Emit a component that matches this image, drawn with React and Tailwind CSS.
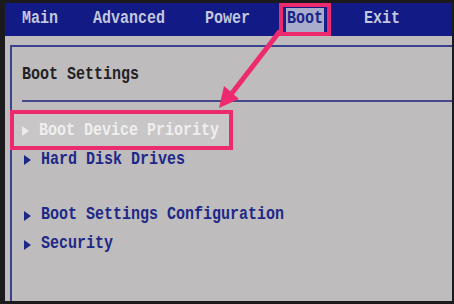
import React from 'react';

const mono = { fontFamily: '"Liberation Mono", "DejaVu Sans Mono", monospace' };

function Tri({ color }) {
  return (
    <svg width="7" height="10" viewBox="0 0 7 10" className="shrink-0">
      <polygon points="0,0 7,5 0,10" fill={color} />
    </svg>
  );
}

function Item({ label, color = '#1d2888' }) {
  return (
    <div className="flex items-center h-[29px] pl-[12px]">
      <Tri color={color} />
      <span className="ml-[10px] inline-block scale-y-[1.2]" style={{ color }}>{label}</span>
    </div>
  );
}

export default function App() {
  return (
    <div
      className="relative w-[454px] h-[304px] bg-[#1b1b1d] pt-[3px] pl-[5px] pr-[2px] pb-[3px] flex flex-col overflow-hidden text-[15px] font-bold"
      style={mono}
    >
      {/* menu bar */}
      <div className="h-[33px] bg-[#121a86] flex items-center text-[#c3c7dd] shrink-0">
        <span className="ml-[17px] inline-block scale-y-[1.25]">Main</span>
        <span className="ml-[35px] inline-block scale-y-[1.25]">Advanced</span>
        <span className="ml-[40px] inline-block scale-y-[1.25]">Power</span>
        <div className="ml-[29px] h-[33px] border-[4px] border-[#ee2a6e] px-[1px] flex items-center">
          <span className="h-[24px] px-[1px] bg-[#a9accb] text-[#1a238a] flex items-center border-x-[2px] border-[#1a238a]">
            <span className="inline-block scale-y-[1.25]">Boot</span>
          </span>
        </div>
        <span className="ml-[33px] inline-block scale-y-[1.25]">Exit</span>
      </div>

      {/* content */}
      <div className="flex-1 bg-[#bebcbc] pt-[9px]">
        <div className="ml-[5px] h-full border-l-2 border-t-2 border-[#3c418e]">
          <div className="ml-[10px] h-[55px] border-b-2 border-[#454a8c] flex items-center pt-[4px] text-[#222226]">
            <span className="inline-block scale-y-[1.25]">Boot Settings</span>
          </div>
          <div className="mt-[8px] -ml-[2px] w-[223px] h-[40px] border-[4px] border-[#ee2a6e] bg-[#c8c6c6] flex items-center pl-[8px] pt-[2px]">
            <Tri color="#ececec" />
            <span className="ml-[10px] inline-block scale-y-[1.2] text-[#efefef]">Boot Device Priority</span>
          </div>
          <div className="h-[20px] flex items-center pl-[12px]">
            <Tri color="#1d2888" />
            <span className="ml-[10px] inline-block scale-y-[1.2] text-[#1d2888]">Hard Disk Drives</span>
          </div>
          <div className="mt-[31px]">
            <Item label="Boot Settings Configuration" />
            <Item label="Security" />
          </div>
        </div>
      </div>

      {/* callout arrow */}
      <svg className="absolute left-0 top-0 pointer-events-none" width="454" height="304">
        <line x1="280" y1="31" x2="229" y2="97" stroke="#ee2a6e" strokeWidth="5" />
        <polygon points="219,108 239,99 224,86" fill="#ee2a6e" />
      </svg>
    </div>
  );
}
